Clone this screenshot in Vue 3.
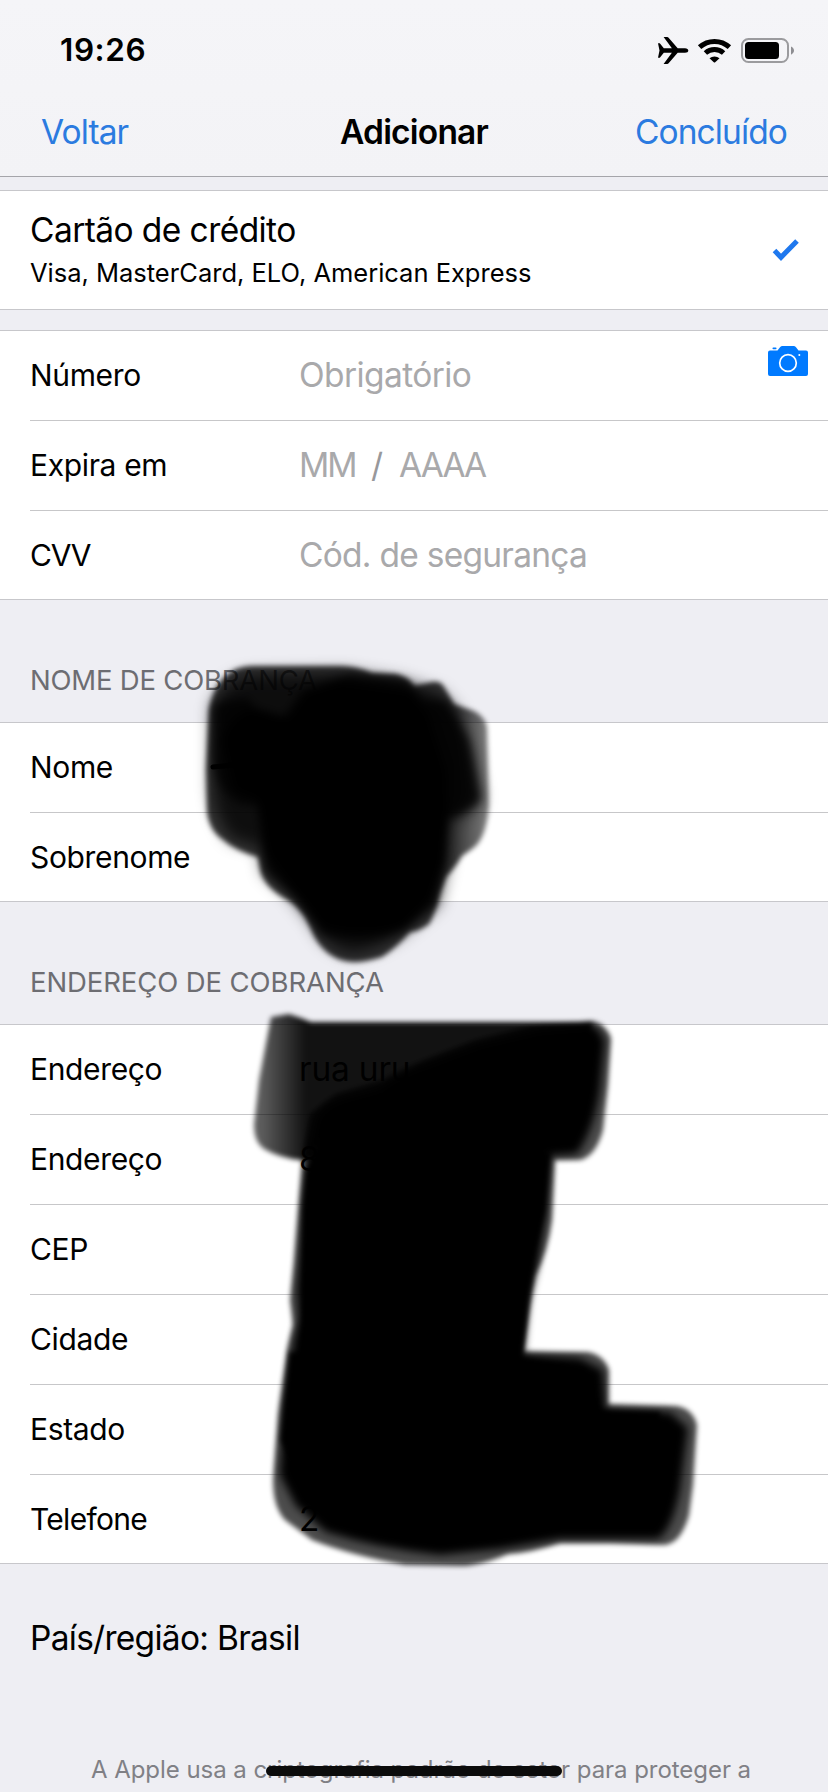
<script setup>
const cardFields = [
  { label: 'Número', hint: 'Obrigatório', camera: true },
  { label: 'Expira em', date: ['MM', '/', 'AAAA'] },
  { label: 'CVV', hint: 'Cód. de segurança', tight: true }
]
const nameFields = ['Nome', 'Sobrenome']
const addressFields = [
  { label: 'Endereço', value: 'rua uru' },
  { label: 'Endereço', value: '8' },
  { label: 'CEP' },
  { label: 'Cidade' },
  { label: 'Estado' },
  { label: 'Telefone', value: '2' }
]
</script>

<template>
  <div class="screen">
    <header class="top">
      <div class="status">
        <span class="clock">19:26</span>
        <svg class="status-icons" width="138" height="30" viewBox="656 34 138 30">
          <path d="M658 42.300h1.800l4 4.900h8.100L663.600 36h3.600c.6 0 1 .2 1.400.7l9.100 10.500h7.300c2.100 0 3.300 1 3.300 2.300s-1.200 2.300-3.300 2.300h-7.300l-9.100 10.500c-.4.5-.8.7-1.400.7h-3.600l8.300-11.200h-8.100l-4 4.900H658l1.500-7.200z" />
          <g fill="none" stroke="#000" stroke-width="5">
            <path d="M699.600 46.200a22 22 0 0 1 29.800 0" />
            <path d="M705.400 52a13.600 13.600 0 0 1 18.200 0" />
          </g>
          <path d="M709.500 57.300a7.500 7.500 0 0 1 10 0l-4.300 3.900q-.7.600-1.400 0z" />
          <rect x="742" y="38" width="46" height="23" rx="6.500" fill="none" stroke="#9b9b9e" stroke-width="2" />
          <rect x="745" y="41" width="34" height="17" rx="3.500" />
          <path d="M791 45.500c4 1.700 4 6.500 0 8.200z" fill="#8e8e92" />
        </svg>
      </div>
      <nav class="nav">
        <a class="link back">Voltar</a>
        <h1>Adicionar</h1>
        <a class="link done">Concluído</a>
      </nav>
    </header>

    <section class="group method">
      <div class="method-text">
        <div class="method-name">Cartão de crédito</div>
        <div class="method-brands">Visa, MasterCard, ELO, American Express</div>
      </div>
      <svg class="check" width="28" height="24" viewBox="0 0 28 24">
        <path d="M2.500 12.600 9 19.300 25 3" fill="none" stroke="#1f78ee" stroke-width="5" />
      </svg>
    </section>

    <section class="group card-group">
      <div v-for="f in cardFields" :key="f.label" class="row">
        <span class="label" :class="{ cvv: f.label === 'CVV' }">{{ f.label }}</span>
        <span v-if="f.date" class="date">
          <span class="mm">{{ f.date[0] }}</span><span class="slash">{{ f.date[1] }}</span><span class="yy">{{ f.date[2] }}</span>
        </span>
        <span v-else class="hint" :class="{ tight: f.tight }">{{ f.hint }}</span>
        <svg v-if="f.camera" class="camera" width="40" height="30" viewBox="0 0 40 30">
          <path fill="#007aff" d="M2 4.500h7.500l2.500-3.300Q13 0 14.500 0h11Q27 0 28 1.200l2.500 3.300H38q2 0 2 2V28q0 2-2 2H2q-2 0-2-2V6.500q0-2 2-2z" />
          <rect x="4.500" y="1.500" width="4" height="1.700" rx=".8" fill="#007aff" />
          <circle cx="20" cy="17" r="8.300" fill="none" stroke="#fff" stroke-width="1.700" />
          <circle cx="31.300" cy="9" r="1" fill="#fff" />
        </svg>
      </div>
    </section>

    <h2 class="section-title name-title">NOME DE COBRANÇA</h2>
    <section class="group">
      <div v-for="label in nameFields" :key="label" class="row">
        <span class="label">{{ label }}</span>
      </div>
    </section>

    <h2 class="section-title">ENDEREÇO DE COBRANÇA</h2>
    <section class="group">
      <div v-for="(f, i) in addressFields" :key="i" class="row">
        <span class="label" :class="{ phone: f.label === 'Telefone' }">{{ f.label }}</span>
        <span v-if="f.value" class="value">{{ f.value }}</span>
      </div>
    </section>

    <div class="country">País/região: Brasil</div>
    <p class="note">A Apple usa a criptografia padrão do setor para proteger a</p>

    <!-- Marker strokes hiding the personal fields -->
    <svg class="scribble" width="828" height="1792" viewBox="0 0 828 1792">
      <defs>
        <filter id="s2" x="-10%" y="-10%" width="120%" height="120%"><feGaussianBlur stdDeviation="2.500" /></filter>
        <filter id="s4" x="-20%" y="-20%" width="140%" height="140%"><feGaussianBlur stdDeviation="4" /></filter>
        <filter id="s8" x="-20%" y="-20%" width="140%" height="140%"><feGaussianBlur stdDeviation="8" /></filter>
        <linearGradient id="fade" gradientUnits="userSpaceOnUse" x1="262" y1="0" x2="306" y2="0">
          <stop offset="0" stop-color="#000" stop-opacity=".64" />
          <stop offset="1" stop-color="#000" stop-opacity=".93" />
        </linearGradient>
        <linearGradient id="edge" gradientUnits="userSpaceOnUse" x1="455" y1="0" x2="489" y2="0">
          <stop offset="0" stop-color="#000" stop-opacity=".78" />
          <stop offset="1" stop-color="#000" stop-opacity=".5" />
        </linearGradient>
      </defs>

      <g filter="url(#s2)">
        <path fill="url(#edge)" d="M236 669Q244 666 252 666H340Q356 666 372 673L396 674Q408 677 414 686L432 682Q441 681 444 687L454 704 474 711Q486 717 487 728L488 768 489 806Q486 840 472 849L462 856Q455 868 446 877L440 893Q436 912 429 924 420 931 410 932 396 948 382 957 366 962 354 962C334 962 318 948 311 929L305 917Q296 904 286 899 266 888 261 873L258 857Q236 851 222 839 209 830 207 811L206 770 209 710Q214 680 236 669Z" />
      </g>
      <g filter="url(#s8)">
        <path fill-opacity=".75" d="M212 706Q222 680 250 674L345 672 400 680 440 692 458 712 472 750 482 800Q470 814 449 820L448 860 438 905 407 930Q380 952 350 954 322 946 312 922L290 895 264 872 260 848 232 840Q214 820 212 790Z" />
      </g>
      <g filter="url(#s4)">
        <path fill-opacity=".75" d="M214 706Q222 700 248 698L262 717 285 715 302 690 350 674 405 680 424 700 446 702 468 740 480 800Q468 812 448 818L446 860 434 904 405 929Q370 945 322 934L298 900 266 870 262 842 257 806 240 804Q216 790 213 760Z" />
        <path d="M222 740Q230 714 256 708L288 718 306 692 340 682 410 692 428 714 446 770 448 820 442 864 430 898 404 926Q360 938 322 926L296 893 266 852 258 800 234 790Z" />
      </g>
      <path d="M213 767 244 764" fill="none" stroke="#000" stroke-width="5" stroke-linecap="round" />

      <g filter="url(#s2)">
        <path fill="url(#fade)" d="M271 1017 289 1014Q299 1017 311 1022L592 1022 590 1060 400 1090 330 1125 312 1160 300 1160Q280 1158 264 1149 254 1142 254 1125L259 1080 266 1043Z" />
        <path fill-opacity=".7" d="M302 1159 310 1114 336 1094 383 1080 425 1060 473 1041 530 1026 592 1021Q607 1025 611 1038L608 1085 603 1130Q596 1156 580 1160L555 1160 552 1220Q548 1252 535 1275L530 1305 523 1352 588 1352Q604 1355 609 1370L608 1404 677 1406Q693 1409 697 1425L693 1485 689 1515Q681 1543 665 1545L610 1543 560 1543Q530 1553 508 1554 478 1567 458 1566L405 1565Q350 1555 312 1540L285 1520Q273 1507 273 1480L278 1415 287 1350 293 1325 290 1300 294 1262Z" />
      </g>
      <g filter="url(#s4)">
        <path d="M310 1150 316 1118Q322 1106 340 1099L380 1088Q398 1073 430 1063L480 1044 540 1030 596 1026 605 1040 600 1090Q594 1130 577 1154L550 1156 546 1215 537 1268 526 1310 521 1354 580 1358 603 1370 606 1410 670 1412 688 1428 680 1490Q672 1530 658 1539L560 1539 500 1549 440 1555Q380 1549 326 1532L296 1506 280 1475 284 1405 294 1340 299 1320 297 1290 304 1200Z" />
        <path fill-opacity=".8" d="M310 1150 325 1112 390 1093 480 1048 590 1030 590 1090 570 1150 545 1150 533 1260 523 1360 590 1370 608 1415 670 1418 675 1485 650 1536 560 1538 450 1545 326 1522 286 1475 299 1330Z" />
      </g>
      <path filter="url(#s2)" d="M306 1170 316 1150 550 1152 545 1210 532 1262 522 1348 520 1365 300 1365 303 1300 303 1210ZM290 1352 520 1358 585 1370 600 1410 660 1412 660 1500 300 1480 281 1440Z" />
    </svg>
    <div class="home-bar"></div>
  </div>
</template>

<style scoped>
.screen {
  position: relative;
  display: flex;
  flex-direction: column;
  width: 828px;
  height: 1792px;
  overflow: hidden;
  background: #eeeef3;
  color: #000;
  font-family: Inter, "Liberation Sans", sans-serif;
  font-size: 33.5px;
  line-height: 40px;
}
.top {
  flex: none;
  height: 176px;
  border-bottom: 1px solid #a5a5aa;
  background: linear-gradient(#f5f5f8, #f3f3f6);
}
.status {
  display: flex;
  align-items: center;
  justify-content: space-between;
  height: 99px;
  padding: 0 34px 0 60px;
}
.clock { font-size: 31.5px; font-weight: 600; letter-spacing: 0.56px; }
.nav {
  display: grid;
  grid-template-columns: 1fr auto 1fr;
  align-items: center;
  height: 66px;
  padding: 0 41px;
}
.link { color: #2b7be0; letter-spacing: -0.9px; }
.done { justify-self: end; }
h1 { margin: 0; font-size: 33.5px; font-weight: 600; letter-spacing: -0.8px; }
.group {
  flex: none;
  background: #fff;
  border-top: 1px solid #c7c7cb;
}
.method {
  display: flex;
  align-items: center;
  justify-content: space-between;
  height: 118px;
  margin-top: 13px;
  padding: 0 28px 0 30px;
  border-bottom: 1px solid #c7c7cb;
}
.method-text { display: grid; gap: 3px; padding-top: 3px; }
.method-name { letter-spacing: -0.57px; }
.method-brands { font-size: 25.5px; letter-spacing: -0.01px; }
.card-group { margin-top: 20px; }
.row {
  display: flex;
  align-items: center;
  height: 90px;
  margin-left: 30px;
  padding-bottom: 2px;
  box-sizing: border-box;
  border-bottom: 1px solid #c7c7c9;
}
.row:last-child { height: 89px; margin-left: 0; padding: 0 0 1px 30px; border-color: #c7c7cb; }
.label { width: 269px; font-size: 30px; letter-spacing: -0.35px; }
.cvv { letter-spacing: -1.2px; }
.phone { letter-spacing: -0.7px; }
.hint, .date { color: #a9a9ab; letter-spacing: -0.6px; }
.tight { letter-spacing: -0.74px; }
.date { display: flex; }
.mm { width: 72px; letter-spacing: -2px; }
.slash { width: 28px; color: #98989b; }
.yy { letter-spacing: -1.9px; }
.value { letter-spacing: -0.2px; }
.camera { margin: 0 20px 27px auto; }
.section-title {
  flex: none;
  height: 122px;
  box-sizing: border-box;
  margin: 0;
  padding: 60px 30px 0;
  color: #6d6d72;
  font-size: 27.5px;
  font-weight: 400;
  letter-spacing: -0.1px;
}
.name-title { letter-spacing: -0.2px; }
.country { margin-top: 54px; padding-left: 30px; letter-spacing: -0.72px; }
.note {
  margin: 92px 0 0 91px;
  color: #808085;
  font-size: 24px;
  letter-spacing: -0.05px;
  white-space: nowrap;
}
.scribble { position: absolute; top: 0; left: 0; }
.home-bar {
  position: absolute;
  bottom: 16px;
  left: 266px;
  width: 296px;
  height: 10px;
  border-radius: 5px;
  background: #0b0b0b;
}
</style>
